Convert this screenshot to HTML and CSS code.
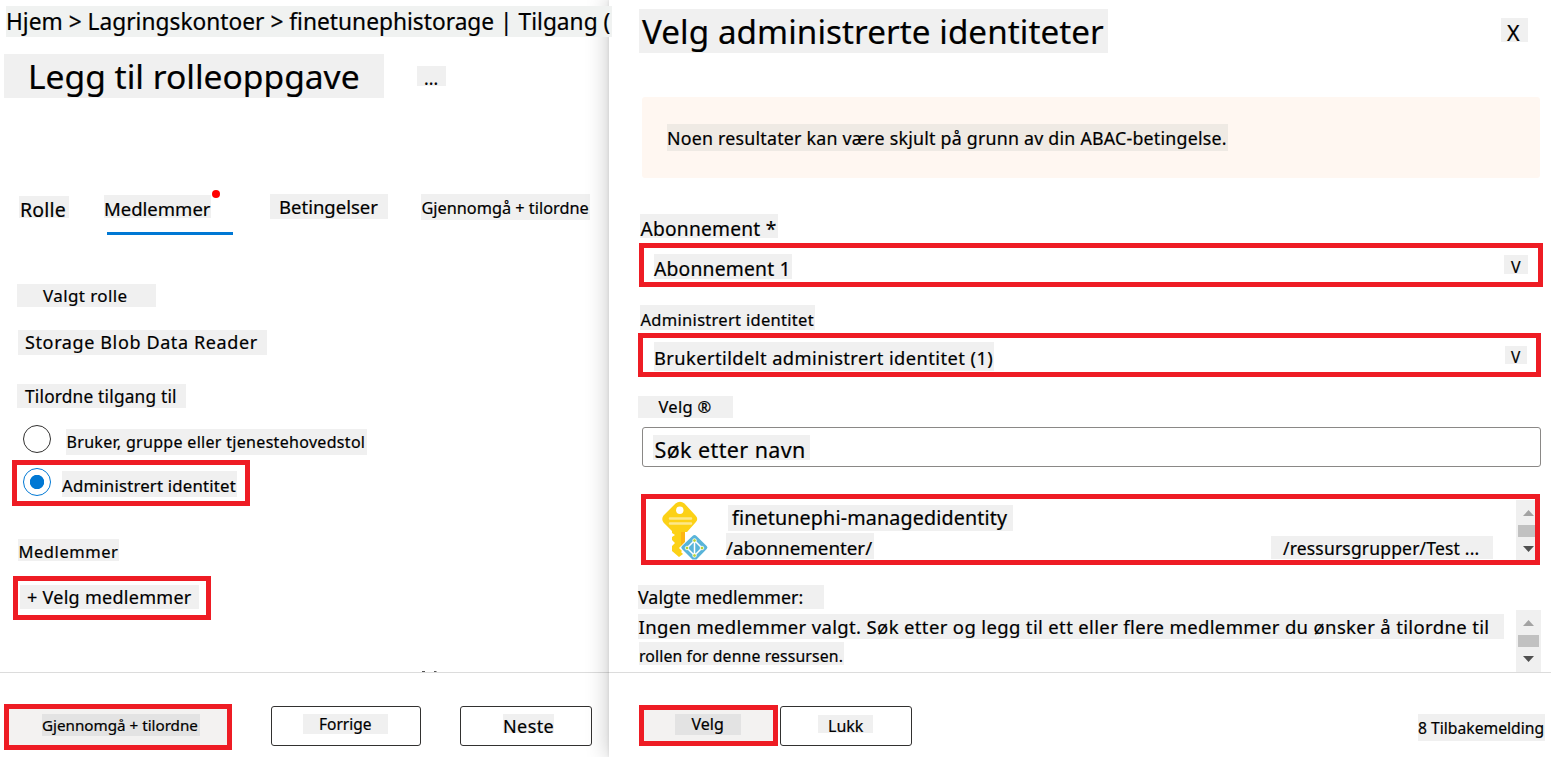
FILE: index.html
```html
<!DOCTYPE html>
<html lang="no">
<head>
<meta charset="utf-8">
<title>Legg til rolleoppgave</title>
<link rel="stylesheet" href="styles.css">
</head>
<body>
<div class="app">
  <main class="page">
    <nav class="chip crumb">Hjem &gt; Lagringskontoer &gt; finetunephistorage | Tilgang (</nav>
    <header class="heading">
      <h1 class="chip page-title">Legg til rolleoppgave</h1>
      <span class="chip more">...</span>
    </header>
    <div class="tabs">
      <span class="chip tab-role">Rolle</span>
      <div class="tab-active">
        <span class="chip tab-members">Medlemmer</span>
        <i class="tab-dot"></i>
        <i class="tab-line"></i>
      </div>
      <span class="chip tab-conditions">Betingelser</span>
      <span class="chip tab-review">Gjennomgå + tilordne</span>
    </div>
    <span class="chip role-label">Valgt rolle</span>
    <span class="chip role-value">Storage Blob Data Reader</span>
    <span class="chip access-label">Tilordne tilgang til</span>
    <div class="option">
      <i class="radio"></i>
      <span class="chip option-user">Bruker, gruppe eller tjenestehovedstol</span>
    </div>
    <div class="marked option-box">
      <i class="radio radio-on"></i>
      <span class="chip option-managed">Administrert identitet</span>
    </div>
    <span class="chip members-label">Medlemmer</span>
    <div class="marked members-box"><span class="chip members-add">+ Velg medlemmer</span></div>
    <footer class="footer page-footer">
      <svg class="clipped" width="18" height="1" viewBox="0 0 18 1"><path d="M1 .5h3M13 .5h2.5" stroke="#555"/></svg>
      <div class="marked action-review"><span class="chip chip-dark label-review">Gjennomgå + tilordne</span></div>
      <div class="button action-prev"><span class="chip label-prev">Forrige</span></div>
      <div class="button action-next"><span class="chip label-next">Neste</span></div>
    </footer>
  </main>

  <aside class="panel">
    <header class="panel-head">
      <h2 class="chip panel-title">Velg administrerte identiteter</h2>
      <span class="chip close">X</span>
    </header>
    <div class="banner"><span class="chip banner-text">Noen resultater kan være skjult på grunn av din ABAC-betingelse.</span></div>
    <span class="chip sub-label">Abonnement *</span>
    <div class="marked sub-box">
      <span class="chip sub-value">Abonnement 1</span>
      <span class="chip sub-arrow">V</span>
    </div>
    <span class="chip identity-label">Administrert identitet</span>
    <div class="marked identity-box">
      <span class="chip identity-value">Brukertildelt administrert identitet (1)</span>
      <span class="chip identity-arrow">V</span>
    </div>
    <span class="chip select-label">Velg ®</span>
    <div class="search"><span class="chip search-text">Søk etter navn</span></div>
    <div class="marked list">
      <svg class="key" width="48" height="61" viewBox="0 0 48 61">
        <path d="M11 31h13v18l-4 4 2 2-4 3-7-6V47l3-3-3-3v-3l3-2-3-2z" fill="#fcd116"/>
        <path d="M20 32h4v13l-4 4z" fill="#fdb515"/>
        <path d="M14.500 4.500Q19 1 23.500 4.500L34.500 16.500Q38 20 34.500 23.500L26 33H12L2.500 23.500Q0 20 2.500 16.500Z" fill="#fcd116"/>
        <circle cx="18.800" cy="11.300" r="3.700" fill="#fff"/>
        <path d="M9 19.500h21M9 24.500h21" stroke="#fde88a" stroke-width="2.500" stroke-linecap="round"/>
        <path d="M33.500 33.500L49 49 33.500 64.500 18 49Z" fill="#fff"/>
        <path d="M31.500 37q2-2 4 0L45.700 47q1.500 1.500 0 3L35.500 60.500h-4L21 50q-1.500-1.500 0-3Z" fill="#59b4d9"/>
        <path d="M33.500 41.500v15M33.500 41.500l-7.500 7.500 7.500 7.500 7.500-7.500z" fill="none" stroke="#fff" stroke-width="1.500"/>
        <g fill="#b8d432" stroke="#fff" stroke-width=".8"><circle cx="33.500" cy="41.500" r="1.800"/><circle cx="26" cy="49" r="1.800"/><circle cx="41" cy="49" r="1.800"/><circle cx="33.500" cy="56.500" r="1.800"/></g>
      </svg>
      <div class="item">
        <span class="chip item-name">finetunephi-managedidentity</span>
        <div class="item-path">
          <span class="chip path-start">/abonnementer/</span>
          <span class="chip path-end">/ressursgrupper/Test ...</span>
        </div>
      </div>
      <svg class="scroll" width="25" height="60" viewBox="0 0 25 60"><path d="M0 0h25v60H0z" fill="#f0f0f0"/><path d="M7 16l5.500-6 5.500 6z" fill="#a3a3a3"/><path d="M2 25h21v12H2z" fill="#c1c1c1"/><path d="M7 46h11l-5.500 6z" fill="#505050"/></svg>
    </div>
    <span class="chip chosen-label">Valgte medlemmer:</span>
    <div class="chosen">
      <div class="chosen-text">
        <span class="chip chosen-first">Ingen medlemmer valgt. Søk etter og legg til ett eller flere medlemmer du ønsker å tilordne til</span>
        <span class="chip chosen-second">rollen for denne ressursen.</span>
      </div>
      <svg class="chosen-scroll" width="25" height="62" viewBox="0 0 25 62"><path d="M0 0h25v62H0z" fill="#f0f0f0"/><path d="M7 16l5.500-6 5.500 6z" fill="#a3a3a3"/><path d="M2 25h21v12H2z" fill="#c1c1c1"/><path d="M7 46h11l-5.500 6z" fill="#505050"/></svg>
    </div>
    <footer class="footer panel-footer">
      <div class="marked action-select"><span class="chip chip-dark label-select">Velg</span></div>
      <div class="button action-close"><span class="chip label-close">Lukk</span></div>
      <span class="chip feedback">8 Tilbakemelding</span>
    </footer>
  </aside>
</div>
</body>
</html>
```

FILE: styles.css
```css
* { box-sizing: border-box; }
body { margin: 0; background: #fff; color: #000; font-family: "Noto Sans", sans-serif; }
h1, h2 { margin: 0; font-weight: 400; }

.app { display: flex; width: 1551px; height: 757px; overflow: hidden; }
.page { display: flex; flex-direction: column; align-items: flex-start; width: 609px; height: 757px; flex: none; }
.panel { display: flex; flex-direction: column; align-items: flex-start; width: 942px; height: 757px; flex: none; background: #fff; position: relative; z-index: 1; box-shadow: 0 0 22px rgba(0, 0, 0, .24), 0 0 3px rgba(0, 0, 0, .1); }

/* --b is the distance from the top of the label to its baseline */
.chip { display: block; flex: none; background: #f0f0f0; white-space: pre; line-height: calc(2 * var(--b) - .776em); -webkit-text-stroke: .2px #000; }
.chip-dark { background: #e3e3e3; }
.marked { display: flex; align-items: flex-start; flex: none; border: 5px solid #ee1c24; }
.button { flex: none; height: 40px; border: 1px solid #323130; border-radius: 3px; background: #fff; }
.footer { display: flex; align-items: flex-start; height: 85px; margin-top: auto; border-top: 1px solid #dcdcdc; flex: none; }

.crumb { --b: 25px; position: relative; z-index: 2; width: 606px; height: 31px; margin: 6px 0 0 6px; background: #f0f2f1; font-size: 22.700px; letter-spacing: .02px; }
.heading { display: flex; align-items: flex-start; margin: 17px 0 0 4px; }
.page-title { --b: 36px; width: 380px; height: 44px; padding-left: 24px; font-size: 33.600px; }
.more { --b: 19px; width: 29px; height: 20px; margin: 12px 0 0 33px; padding-left: 7px; font-size: 17.500px; }

.tabs { display: flex; align-items: flex-start; height: 41px; margin: 96px 0 0 19px; }
.tab-role { --b: 22px; width: 50px; height: 22px; margin-top: 2px; padding-left: 1px; font-size: 19.500px; letter-spacing: .2px; }
.tab-active { position: relative; width: 129px; height: 41px; margin-left: 35px; }
.tab-members { --b: 21px; width: 107px; height: 23px; margin-top: 1px; font-size: 18.500px; }
.tab-dot { position: absolute; left: 108px; top: -4px; width: 8px; height: 8px; border-radius: 50%; background: #f00; }
.tab-line { position: absolute; left: 3px; bottom: 0; width: 126px; height: 3px; background: #0078d4; }
.tab-conditions { --b: 20px; width: 118px; height: 25px; margin-left: 37px; padding-left: 9px; font-size: 18.500px; }
.tab-review { --b: 20.500px; width: 169px; height: 26px; margin-left: 33px; padding-left: .5px; font-size: 16.300px; }

.role-label { --b: 19px; width: 139px; height: 23px; margin: 49px 0 0 17px; padding-left: 26px; font-size: 17px; letter-spacing: .4px; }
.role-value { --b: 19px; width: 249px; height: 25px; margin: 23px 0 0 18px; padding-left: 7px; font-size: 18px; letter-spacing: .62px; }
.access-label { --b: 20px; width: 169px; height: 24px; margin: 29px 0 0 17px; padding-left: 8px; font-size: 17.300px; letter-spacing: .2px; }
.option { display: flex; align-items: flex-start; gap: 15px; height: 30px; margin: 17px 0 0 23px; }
.radio { flex: none; width: 28px; height: 28px; border: 1px solid #323130; border-radius: 50%; }
.radio-on { border-color: #0078d4; background: radial-gradient(circle, #0078d4 6.800px, #fff 7.500px); margin-top: 3px; }
.option-user { --b: 20px; width: 301px; height: 26px; margin-top: 4px; padding-left: .5px; font-size: 16px; letter-spacing: .31px; }
.option-box { width: 238px; height: 46px; gap: 11px; margin: 5px 0 0 12px; padding-left: 6px; }
.option-managed { --b: 22px; width: 175px; height: 26px; margin-top: 6px; font-size: 16.800px; letter-spacing: .19px; }
.members-label { --b: 19px; width: 101px; height: 22px; margin: 33px 0 0 18px; padding-left: .5px; font-size: 16.500px; letter-spacing: .55px; }
.members-box { width: 198px; height: 44px; margin: 15px 0 0 13px; padding: 4px 0 0 2px; }
.members-add { --b: 19px; width: 179px; height: 24px; padding-left: 7px; font-size: 18px; letter-spacing: .28px; }

.page-footer { position: relative; width: 609px; padding: 31px 0 0 4px; }
.clipped { position: absolute; left: 421px; top: -2px; }
.action-review { width: 228px; height: 46px; padding: 5px 0 0 33px; background: #f3f2f1; }
.label-review { --b: 17px; width: 158px; height: 22px; font-size: 15.200px; }
.action-prev { width: 150px; margin: 2px 0 0 39px; padding: 7px 0 0 31px; }
.label-prev { --b: 17px; width: 85px; height: 20px; padding-left: 16px; font-size: 15.500px; }
.action-next { width: 132px; margin: 2px 0 0 39px; padding: 7px 0 0 42px; }
.label-next { --b: 19px; width: 51px; height: 19px; font-size: 18px; letter-spacing: .4px; }

.panel-head { display: flex; align-items: flex-start; margin: 9px 0 0 30px; }
.panel-title { --b: 36px; width: 469px; height: 44px; padding-left: 3px; font-size: 33.200px; letter-spacing: .07px; }
.close { --b: 23px; width: 27px; height: 24px; margin: 9px 0 0 393px; padding-left: 6px; font-size: 21.500px; }
.banner { width: 898px; height: 81px; margin: 44px 0 0 33px; padding: 27px 0 0 25px; border-radius: 3px; background: #fff7f1; }
.banner-text { --b: 21px; width: 561px; height: 27px; background: #efeae4; font-size: 17.800px; letter-spacing: .23px; }
.sub-label { --b: 22px; width: 138px; height: 24px; margin: 36px 0 0 31px; padding-left: .5px; font-size: 19.200px; letter-spacing: .22px; }
.sub-box { width: 904px; height: 44px; margin: 5px 0 0 30px; padding: 6px 0 0 10px; }
.sub-value { --b: 22px; width: 138px; height: 25px; font-size: 19.300px; letter-spacing: .2px; }
.sub-arrow { --b: 19px; width: 24px; height: 19px; margin: 1px 0 0 712px; padding-left: 7px; font-size: 16px; }
.identity-label { --b: 21px; width: 175px; height: 25px; margin: 18px 0 0 31px; padding-left: .5px; font-size: 16.500px; letter-spacing: .3px; }
.identity-box { width: 903px; height: 44px; margin: 3px 0 0 29px; padding: 4px 0 0 11px; }
.identity-value { --b: 23px; width: 340px; height: 29px; font-size: 18.300px; letter-spacing: .44px; }
.identity-arrow { --b: 18px; width: 22px; height: 18px; margin: 4px 0 0 511px; padding-left: 6px; font-size: 15.500px; }
.select-label { --b: 17px; width: 95px; height: 22px; margin: 19px 0 0 29px; padding-left: 20.500px; font-size: 16.500px; letter-spacing: .3px; }
.search { width: 899px; height: 40px; margin: 9px 0 0 33px; padding: 7px 0 0 10px; border: 1px solid #8a8886; border-radius: 3px; flex: none; }
.search-text { --b: 23px; width: 157px; height: 25px; padding-left: 1.500px; font-size: 21.500px; letter-spacing: .4px; }

.list { width: 899px; height: 71px; margin: 27px 0 0 32px; overflow: hidden; }
.key { flex: none; margin: 0 0 0 15px; }
.item { width: 767px; margin-left: 17px; padding-top: 6px; flex: none; }
.item-name { --b: 21px; width: 285px; height: 26px; margin-left: 2px; padding-left: 4px; font-size: 19.700px; letter-spacing: .15px; }
.item-path { display: flex; align-items: flex-start; margin-top: 2px; }
.path-start { --b: 23px; width: 148px; height: 26px; font-size: 18.800px; }
.path-end { --b: 19px; width: 222px; height: 23px; margin: 3px 0 0 397px; padding-left: 12px; font-size: 17.500px; letter-spacing: .18px; }
.scroll { flex: none; margin: 1px 0 0 23px; }

.chosen-label { --b: 19px; width: 186px; height: 24px; margin: 20px 0 0 29px; font-size: 17.800px; letter-spacing: .05px; }
.chosen { display: flex; align-items: flex-start; margin: 1px 0 0 29px; }
.chosen-text { width: 866px; margin-top: 4px; }
.chosen-first { --b: 20px; width: 866px; height: 25px; font-size: 18.500px; padding-left: .5px; letter-spacing: .355px; }
.chosen-second { --b: 21px; width: 205px; height: 23px; margin: 3px 0 0 1px; font-size: 15.800px; letter-spacing: .13px; }
.chosen-scroll { flex: none; margin-left: 12px; }

.panel-footer { width: 942px; padding: 32px 0 0 30px; }
.action-select { width: 139px; height: 41px; padding: 4px 0 0 31px; background: #f3f2f1; }
.label-select { --b: 17px; width: 66px; height: 21px; padding-left: 16.500px; font-size: 16px; }
.action-close { width: 132px; margin: 1px 0 0 2px; padding: 8px 0 0 37px; }
.label-close { --b: 18px; width: 55px; height: 18px; padding-left: 10px; font-size: 16px; }
.feedback { --b: 20.500px; width: 127px; height: 27px; margin: 9px 0 0 506px; font-size: 15.700px; }
```
